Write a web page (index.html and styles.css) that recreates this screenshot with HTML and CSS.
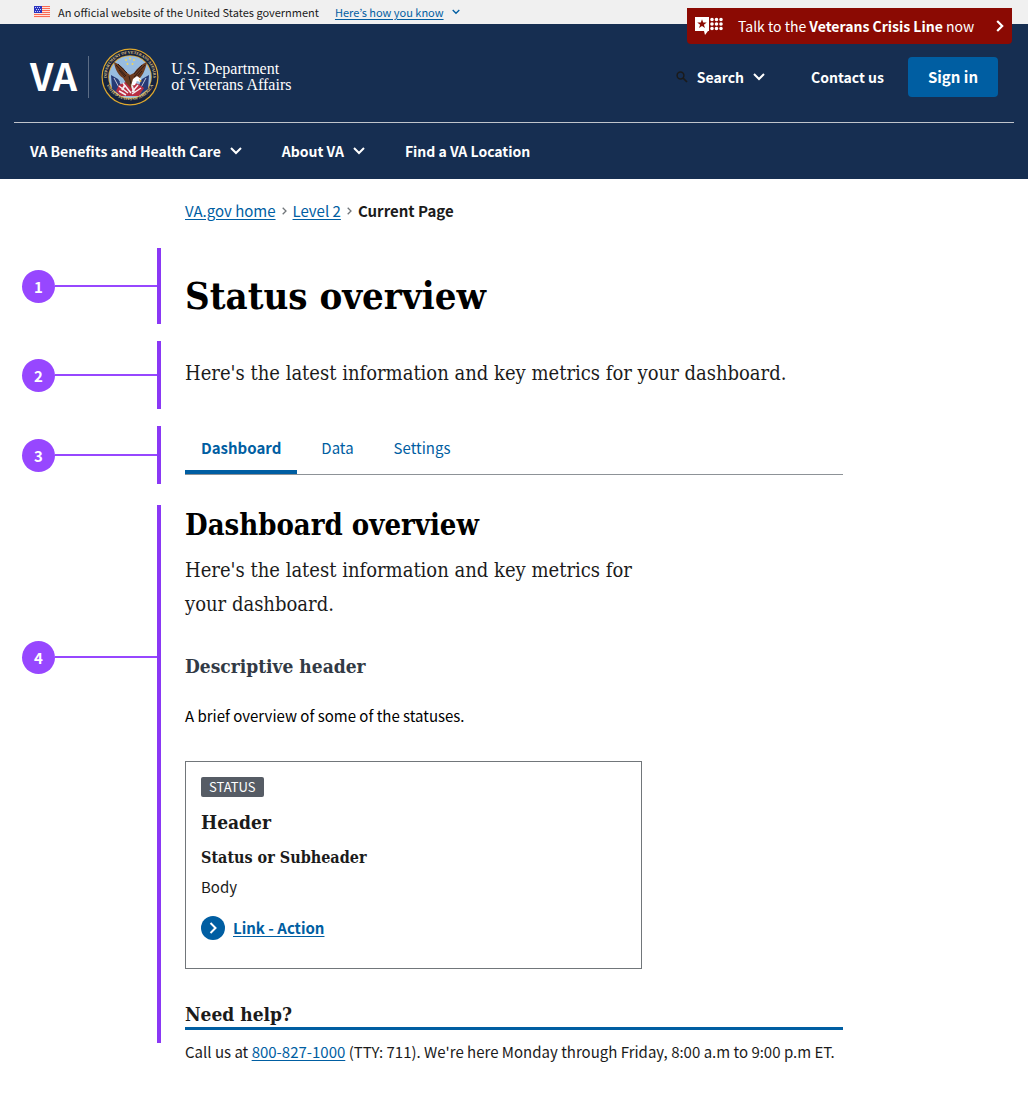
FILE: index.html
```html
<!DOCTYPE html>
<html lang="en">
<head>
<meta charset="utf-8">
<meta name="viewport" content="width=device-width, initial-scale=1">
<title>Status overview | Veterans Affairs</title>
<link rel="stylesheet" href="styles.css">
</head>
<body>
<div class="gov-banner">
  <svg class="flag" viewBox="0 0 16 12" aria-hidden="true">
    <rect width="16" height="12" fill="#fde3dd"/>
    <path d="M0 .5h16M0 2.5h16M0 4.5h16M0 6.5h16M0 8.5h16M0 10.5h16" stroke="#fa6a52" stroke-width="1"/>
    <rect width="8" height="7" fill="#2b34c0"/>
    <path d="M1 1.5h6M2 3.5h5M1 5.5h6" stroke="#c9cdf5" stroke-width="1" stroke-dasharray="1 1"/>
  </svg>
  <span>An official website of the United States government</span>
  <a class="gov-link" href="#">Here’s how you know</a>
  <svg class="chev-small" viewBox="0 0 8 6" aria-hidden="true"><path d="M.7 1 4 4.3 7.3 1" fill="none" stroke="#005ea2" stroke-width="1.3"/></svg>
</div>

<a class="crisis" href="#">
  <svg class="crisis-icon" viewBox="0 0 29 18" aria-hidden="true">
    <path d="M0 0h14v14h-1l-3 4-1-4H0z" fill="#fff"/>
    <path d="m7 2.3 1.200 3.300h3.500L8.900 7.700l1.100 3.400-3-2.100-3 2.100 1.100-3.400-2.800-2.100h3.500z" fill="#8b0a03"/>
    <path d="M17 2.500h9.200M17 7h9.200M17 11.500h9.200" stroke="#fff" stroke-width="3.600" stroke-linecap="round" stroke-dasharray="0 4.500"/>
  </svg>
  <span>Talk to the <strong>Veterans Crisis Line</strong> now</span>
  <svg class="crisis-arrow" viewBox="0 0 8 12" aria-hidden="true"><path d="m1.200 1 5 5-5 5" fill="none" stroke="#fff" stroke-width="2.200"/></svg>
</a>

<header class="site-header">
  <div class="masthead">
    <a class="brand" href="#">
      <span class="va">VA</span>
      <svg class="seal" viewBox="0 0 58 58" role="img" aria-label="Department of Veterans Affairs seal">
        <defs>
          <path id="ring-top" d="M6.500 35A23.300 23.300 0 1 1 51.500 35"/>
          <path id="ring-bottom" d="M4.500 34A25.600 25.600 0 0 0 53.500 34"/>
        </defs>
        <circle cx="29" cy="29" r="28.500" fill="#e0a92e"/>
        <circle cx="29" cy="29" r="27.300" fill="#15233f"/>
        <circle cx="29" cy="29" r="21.800" fill="#d8a637"/>
        <circle cx="29" cy="29" r="21" fill="#98bde0"/>
        <g class="seal-text">
          <text><textPath href="#ring-top" startOffset="50%" text-anchor="middle">DEPARTMENT OF VETERANS AFFAIRS</textPath></text>
          <text><textPath href="#ring-bottom" startOffset="50%" text-anchor="middle">UNITED STATES OF AMERICA</textPath></text>
        </g>
        <g fill="#f2d65b"><circle cx="25" cy="12" r="1"/><circle cx="29" cy="10.500" r="1"/><circle cx="33" cy="12" r="1"/><circle cx="26.500" cy="16" r="1"/><circle cx="31.500" cy="16" r="1"/></g>
        <path d="m10 27 7 4 8 12-6 4-8-6zM48 27l-7 4-8 12 6 4 8-6z" fill="#263a75"/>
        <path d="m19 34 5 10M13 30l8 15M39 34l-5 10M45 30l-8 15" stroke="#e9e7ef" stroke-width=".8"/>
        <path d="m18 37 9-4 10 3 6 4-5 8H20l-5-5z" fill="#b92d42"/>
        <path d="m18 38 9 7M22 35l8 10M18 43l7 4M40 40l-9 6M37 37l-6 7" stroke="#f6eff2" stroke-width="1.500"/>
        <path d="M13 14c1 6 3 12 9 16l3 5 5 5 6-7c5-4 8-10 10-19-5 2-10 6-13 11l-4 2-4-3c-3-5-7-8-12-10z" fill="#6d3c20"/>
        <path d="m15 17 10 11M17 16l9 9M18 22l6 7M44 17 33 29M41 17l-8 9M41 23l-7 8M28 28l2 8" stroke="#2f1d18" stroke-width="1"/>
        <path d="m32 31 4-3 4 3-1 3-3-1-2 4-4 1z" fill="#fff"/>
        <path d="m38 31 3 2-2 1z" fill="#edb62c"/>
        <path d="m24 37-3 5M31 38l2 6" stroke="#f3edf0" stroke-width="2"/>
      </svg>
      <span class="dept">U.S. Department<br>of Veterans Affairs</span>
    </a>
    <div class="tools">
      <button class="nav-item" type="button">
        <svg class="search-icon" viewBox="0 0 12 12" aria-hidden="true"><circle cx="4.500" cy="4.500" r="3.400" fill="none" stroke="#1b1b1b" stroke-width="1.500"/><path d="m7 7 4 4" stroke="#1b1b1b" stroke-width="1.700"/></svg>
        Search
        <svg class="chev" viewBox="0 0 12 8" aria-hidden="true"><path d="m1 1 5 5 5-5" fill="none" stroke="#fff" stroke-width="2"/></svg>
      </button>
      <a class="nav-item contact" href="#">Contact us</a>
      <button class="sign-in" type="button">Sign in</button>
    </div>
  </div>
  <nav class="main-nav" aria-label="Primary">
    <button class="nav-item" type="button">VA Benefits and Health Care
      <svg class="chev" viewBox="0 0 12 8" aria-hidden="true"><path d="m1 1 5 5 5-5" fill="none" stroke="#fff" stroke-width="2"/></svg>
    </button>
    <button class="nav-item" type="button">About VA
      <svg class="chev" viewBox="0 0 12 8" aria-hidden="true"><path d="m1 1 5 5 5-5" fill="none" stroke="#fff" stroke-width="2"/></svg>
    </button>
    <a class="nav-item" href="#">Find a VA Location</a>
  </nav>
</header>

<nav class="breadcrumbs" aria-label="Breadcrumb">
  <a href="#">VA.gov home</a>
  <svg class="crumb-sep" viewBox="0 0 5 8" aria-hidden="true"><path d="m.7.7 3.300 3.300L.7 7.300" fill="none" stroke="#71767a" stroke-width="1.300"/></svg>
  <a href="#">Level 2</a>
  <svg class="crumb-sep" viewBox="0 0 5 8" aria-hidden="true"><path d="m.7.7 3.300 3.300L.7 7.300" fill="none" stroke="#71767a" stroke-width="1.300"/></svg>
  <strong aria-current="page">Current Page</strong>
</nav>

<main>
  <section class="region">
    <div class="marker"><span class="badge">1</span></div>
    <div class="content content-title"><h1>Status overview</h1></div>
  </section>
  <section class="region">
    <div class="marker"><span class="badge">2</span></div>
    <div class="content content-intro"><p class="intro">Here's the latest information and key metrics for your dashboard.</p></div>
  </section>
  <section class="region">
    <div class="marker"><span class="badge">3</span></div>
    <div class="content content-tabs">
      <nav class="tabs" aria-label="Sections">
        <a class="tab tab-active" href="#" aria-current="page">Dashboard</a>
        <a class="tab" href="#">Data</a>
        <a class="tab" href="#">Settings</a>
      </nav>
    </div>
  </section>
  <section class="region region-body">
    <div class="marker marker-long"><span class="badge">4</span></div>
    <div class="content">
      <h2>Dashboard overview</h2>
      <p class="intro intro-narrow">Here's the latest information and key metrics for your dashboard.</p>
      <h3>Descriptive header</h3>
      <p class="overview">A brief overview of some of the statuses.</p>
      <article class="card">
        <span class="tag">STATUS</span>
        <h4 class="card-title">Header</h4>
        <h5 class="card-sub">Status or Subheader</h5>
        <p class="card-body">Body</p>
        <a class="action" href="#">
          <svg class="action-icon" viewBox="0 0 24 24" aria-hidden="true"><circle cx="12" cy="12" r="12" fill="#005ea2"/><path d="m9.500 7 5 5-5 5" fill="none" stroke="#fff" stroke-width="2"/></svg>
          <span>Link - Action</span>
        </a>
      </article>
      <h3 class="help-title">Need help?</h3>
      <p class="help">Call us at <a href="#">800-827-1000</a> (TTY: 711). We're here Monday through Friday, 8:00 a.m to 9:00 p.m ET.</p>
    </div>
  </section>
</main>
</body>
</html>
```
FILE: styles.css
```css
:root {
  --sans: "Noto Sans CJK KR", "Noto Sans CJK SC", "Open Sans", sans-serif;
  --slab: "DejaVu Serif Condensed", "DejaVu Serif", serif;
  --navy: #162e51;
  --blue: #005ea2;
  --ink: #1b1b1b;
  --violet: #9747ff;
}

* { box-sizing: border-box; }

body {
  margin: 0;
  position: relative;
  background: #fff;
  color: var(--ink);
  font-family: var(--sans);
  font-size: 15px;
  line-height: 26px;
}

h1, h2, h3, h4, h5, p { margin: 0; }
a { color: var(--blue); text-underline-offset: 2px; }
button { font: inherit; border: 0; background: none; padding: 0; cursor: pointer; }
svg { display: block; flex: none; }

.gov-banner {
  display: flex;
  align-items: center;
  gap: 8px;
  height: 24px;
  padding: 0 34px;
  background: #f0f0f0;
  font-size: 11px;
  line-height: 16px;
}
.gov-link { margin-left: 8px; }
.flag { width: 16px; height: 12px; }
.chev-small { width: 8px; height: 6px; }

.crisis {
  position: absolute;
  top: 8px;
  right: 16px;
  display: flex;
  align-items: center;
  width: 325px;
  height: 36px;
  padding: 0 8px;
  background: #8b0a03;
  border-radius: 0 0 4px 4px;
  color: #fff;
  font-size: 14px;
  text-decoration: none;
  white-space: nowrap;
}
.crisis-icon { width: 29px; height: 18px; margin-right: 14px; }
.crisis-arrow { width: 8px; height: 12px; margin-left: auto; }

.site-header { background: var(--navy); color: #fff; }
.masthead {
  display: flex;
  align-items: center;
  justify-content: space-between;
  height: 99px;
  margin: 0 14px;
  padding: 8px 16px 0;
  border-bottom: 1px solid #c0c4cb;
}
.brand { display: flex; align-items: center; color: #fff; text-decoration: none; }
.va {
  padding: 0 11px 4px 0;
  border-right: 1px solid #5c6d86;
  font-size: 38px;
  font-weight: 700;
  line-height: 38px;
}
.seal { width: 58px; height: 58px; margin: 0 12px; }
.seal-text { font: 700 4px "Liberation Serif", serif; fill: #e8cf88; }
.dept { font: 16px/16px "Liberation Serif", serif; }

.tools { display: flex; align-items: center; }
.nav-item {
  display: flex;
  align-items: center;
  gap: 9px;
  color: #fff;
  font-size: 14px;
  font-weight: 700;
  text-decoration: none;
  white-space: nowrap;
}
.chev { width: 12px; height: 8px; }
.search-icon { width: 12px; height: 12px; }
.contact { margin: 0 24px 0 46px; }
.sign-in {
  height: 40px;
  padding: 0 20px;
  border-radius: 4px;
  background: var(--blue);
  color: #fff;
  font-weight: 700;
}
.main-nav { display: flex; align-items: center; gap: 40px; height: 56px; padding: 0 30px; }

.breadcrumbs { display: flex; align-items: center; gap: 6px; padding: 19px 185px 0; }
.crumb-sep { width: 5px; height: 8px; }

main { display: grid; gap: 17px; padding: 24px 0 32px; }
.region { display: grid; grid-template-columns: 161px 1fr; }
.region-body { padding-top: 4px; }
.marker {
  display: flex;
  align-items: center;
  padding-left: 22px;
  border-right: 4px solid #8a38f5;
}
.marker::after { content: ""; flex: 1; height: 2px; background: var(--violet); }
.marker-long { align-items: flex-start; margin-bottom: 22px; padding-top: 136px; }
.marker-long::after { margin-top: 15px; }
.badge {
  width: 33px;
  height: 33px;
  border-radius: 50%;
  background: var(--violet);
  color: #fff;
  font-weight: 700;
  line-height: 33px;
  text-align: center;
}
.content { min-width: 0; padding: 0 185px 0 24px; }

h1, h2, h3, h4, h5, .intro { font-family: var(--slab); }
h1 { color: #000; font-size: 38px; line-height: 48px; }
h2 { color: #000; font-size: 29px; line-height: 40px; }
h3 { color: #323a45; font-size: 19px; line-height: 26px; }
.content-title { padding-top: 24px; padding-bottom: 4px; }
.content-intro { padding-top: 15px; padding-bottom: 19px; }
.intro { font-size: 20px; line-height: 34px; }
.intro-narrow { max-width: 460px; margin: 8px 0 32px; }

.content-tabs { height: 58px; }
.tabs { display: flex; gap: 8px; height: 49px; border-bottom: 1px solid #8d9297; }
.tab { padding: 9px 16px 0; text-decoration: none; }
.tab-active { border-bottom: 4px solid var(--blue); font-weight: 700; }

.overview { margin-top: 24px; color: #000; }
.card {
  max-width: 457px;
  margin-top: 32px;
  padding: 15px;
  padding-bottom: 27px;
  border: 1px solid #71767a;
}
.tag {
  display: block;
  width: fit-content;
  padding: 0 8px;
  border-radius: 2px;
  background: #565c65;
  color: #fff;
  font-size: 13px;
  line-height: 20px;
}
.card-title { margin-top: 12px; font-size: 19px; line-height: 26px; }
.card-sub { margin-top: 10px; font-size: 16px; line-height: 26px; }
.card-body { margin-top: 3px; }
.action { display: flex; align-items: center; gap: 8px; width: fit-content; margin-top: 15px; font-weight: 700; }
.action-icon { width: 24px; height: 24px; }
.help-title {
  margin-top: 32px;
  border-bottom: 3px solid var(--blue);
  color: var(--ink);
}
.help { margin-top: 9px; }
```
